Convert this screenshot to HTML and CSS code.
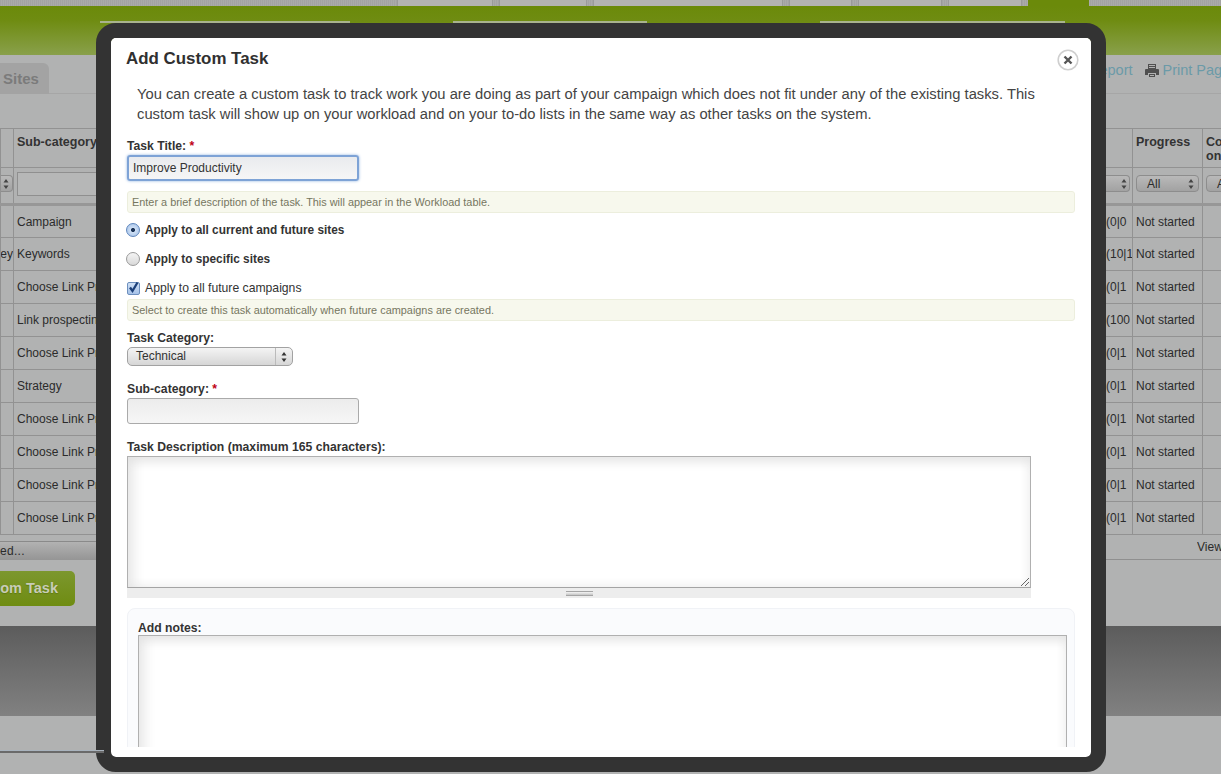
FILE: index.html
```html
<!DOCTYPE html>
<html lang="en">
<head>
<meta charset="utf-8">
<title>Add Custom Task</title>
<link rel="stylesheet" href="styles.css">
</head>
<body>
<div class="page">
  <nav class="topnav">
    <span class="topnav-item w96"></span>
    <span class="topnav-item w88"></span>
    <span class="topnav-item w190"></span>
    <span class="topnav-item w62"></span>
    <span class="topnav-item w84"></span>
    <span class="topnav-item w74"></span>
    <span class="topnav-active"></span>
  </nav>
  <div class="band">
    <div class="subnav">
      <span class="subnav-item s1"></span>
      <span class="subnav-item s2"></span>
      <span class="subnav-item s3"></span>
    </div>
  </div>
  <div class="toolbar">
    <div class="tab">Sites</div>
    <div class="actions">
      <a class="action">Report</a>
      <svg class="printer" width="14" height="15" viewBox="0 0 14 15"><path fill="#4f4f4f" d="M3 1h8v5H3zM1 6h12a1 1 0 0 1 1 1v5h-3v-2H3v2H0V7a1 1 0 0 1 1-1zM4 11h6v3H4z"/><path fill="#b2b2b2" d="M4 2h6v1H4zM4 4h6v1H4zM5 12h4v1H5z"/></svg>
      <a class="action">Print Page</a>
    </div>
  </div>
  <table class="grid">
    <colgroup><col class="c0"><col class="c1"><col class="c2"><col class="c3"><col class="c4"><col class="c5"></colgroup>
    <thead>
      <tr class="head"><th></th><th>Sub-category</th><th></th><th></th><th>Progress</th><th>Co on</th></tr>
      <tr class="filters">
        <td><div class="fsel edge"><svg width="6" height="10" viewBox="0 0 6 10"><path fill="#444" d="M3 0l2.5 3.5h-5zM3 10L.5 6.500h5z"/></svg></div></td>
        <td><div class="ffield"></div></td>
        <td></td>
        <td><div class="fsel score"><svg width="6" height="10" viewBox="0 0 6 10"><path fill="#444" d="M3 0l2.500 3.500h-5zM3 10L.5 6.500h5z"/></svg></div></td>
        <td><div class="fsel"><span>All</span><svg width="6" height="10" viewBox="0 0 6 10"><path fill="#444" d="M3 0l2.500 3.500h-5zM3 10L.5 6.500h5z"/></svg></div></td>
        <td><div class="fsel"><span>All</span></div></td>
      </tr>
    </thead>
    <tbody>
      <tr><td></td><td>Campaign</td><td></td><td class="sc">(0|0</td><td>Not started</td><td></td></tr>
      <tr><td class="cut">Survey</td><td>Keywords</td><td></td><td class="sc">(10|1</td><td>Not started</td><td></td></tr>
      <tr><td></td><td>Choose Link Prospects</td><td></td><td class="sc">(0|1</td><td>Not started</td><td></td></tr>
      <tr><td></td><td>Link prospecting</td><td></td><td class="sc">(100</td><td>Not started</td><td></td></tr>
      <tr><td></td><td>Choose Link Prospects</td><td></td><td class="sc">(0|1</td><td>Not started</td><td></td></tr>
      <tr><td></td><td>Strategy</td><td></td><td class="sc">(0|1</td><td>Not started</td><td></td></tr>
      <tr><td></td><td>Choose Link Prospects</td><td></td><td class="sc">(0|1</td><td>Not started</td><td></td></tr>
      <tr><td></td><td>Choose Link Prospects</td><td></td><td class="sc">(0|1</td><td>Not started</td><td></td></tr>
      <tr><td></td><td>Choose Link Prospects</td><td></td><td class="sc">(0|1</td><td>Not started</td><td></td></tr>
      <tr><td></td><td>Choose Link Prospects</td><td></td><td class="sc">(0|1</td><td>Not started</td><td></td></tr>
    </tbody>
  </table>
  <div class="gridfoot">
    <div class="bulk">ed...</div>
    <div class="view">View</div>
  </div>
  <div class="addbtn">om Task</div>
  <footer class="footer"></footer>
  <div class="rule"></div>

  <div class="modal">
    <div class="modal-body">
      <h1 class="title">Add Custom Task</h1>
      <p class="intro">You can create a custom task to track work you are doing as part of your campaign which does not fit under any of the existing tasks. This custom task will show up on your workload and on your to-do lists in the same way as other tasks on the system.</p>
      <label class="label first">Task Title: <b class="req">*</b></label>
      <input class="field focus" type="text" value="Improve Productivity">
      <div class="hint h1">Enter a brief description of the task. This will appear in the Workload table.</div>
      <div class="choice c-r1"><span class="radio on"></span><strong>Apply to all current and future sites</strong></div>
      <div class="choice c-r2"><span class="radio"></span><strong>Apply to specific sites</strong></div>
      <div class="choice c-ck">
        <span class="check"><svg width="13" height="13" viewBox="0 0 13 13"><path fill="none" stroke="#1c3f78" stroke-width="2.300" d="M3 6.500l2.500 3.500L10.500 1.500"/></svg></span>
        <span class="plain-choice">Apply to all future campaigns</span>
      </div>
      <div class="hint h2">Select to create this task automatically when future campaigns are created.</div>
      <label class="label l-cat">Task Category:</label>
      <div class="select"><span class="select-text">Technical</span><span class="select-arrow"><svg width="6" height="10" viewBox="0 0 6 10"><path fill="#333" d="M3 0l2.500 3.500h-5zM3 10L.5 6.500h5z"/></svg></span></div>
      <label class="label l-sub">Sub-category: <b class="req">*</b></label>
      <input class="field plain" type="text">
      <label class="label l-desc">Task Description (maximum 165 characters):</label>
      <div class="desc">
        <textarea class="area tall"></textarea>
        <svg class="corner" width="10" height="10" viewBox="0 0 10 10"><path stroke="#666" fill="none" d="M1 9l8-8M5 9l4-4"/></svg>
        <div class="grip"><span class="grip-lines"></span></div>
      </div>
      <section class="notes">
        <label class="label l-notes">Add notes:</label>
        <textarea class="area note"></textarea>
      </section>
    </div>
    <svg class="close" width="22" height="22" viewBox="0 0 22 22"><circle cx="11" cy="11" r="9.800" fill="#fff" stroke="#cfcfcf" stroke-width="1.600"/><path stroke="#555" stroke-width="2.400" fill="none" d="M7.500 7.500l7 7M14.500 7.500l-7 7"/></svg>
  </div>
</div>
</body>
</html>
```
FILE: styles.css
```css
* { box-sizing: border-box; }
html, body { margin: 0; padding: 0; }
body { font-family: "Liberation Sans", Arial, sans-serif; color: #2b2b2b; }
.page { position: relative; width: 1221px; height: 774px; overflow: hidden; background: #b1b2b2; }

.topnav { display: flex; height: 6px; padding-left: 397px; gap: 6px; background: repeating-linear-gradient(90deg, #a3a3a3 0 1px, #aaaaaa 1px 2px); }
.topnav-item { background: #b3b3b3; border-left: 1px solid #9a9a9a; border-right: 1px solid #9a9a9a; }
.w96 { width: 96px; } .w88 { width: 88px; } .w190 { width: 190px; } .w62 { width: 63px; } .w84 { width: 84px; } .w74 { width: 74px; }
.topnav-active { width: 61px; background: #6b8a0a; }

.band { height: 49px; background: linear-gradient(#6b8a0a 0, #6f8c12 30%, #89a04b 100%); }
.subnav { display: flex; padding: 15px 0 0 100px; }
.subnav-item { height: 2px; background: #a9b38e; }
.s1 { width: 250px; } .s2 { width: 194px; margin-left: 103px; } .s3 { width: 245px; margin-left: 173px; }

.toolbar { display: flex; height: 39px; border-bottom: 1px solid #a6a6a6; }
.tab { flex: none; width: 49px; height: 31px; margin-top: 8px; padding: 7px 0 0 3px; background: #a3a3a3; border-top-right-radius: 6px; font-size: 15px; font-weight: 700; color: #7b7b7b; }
.actions { display: flex; flex: none; align-items: center; margin-left: 1040px; height: 30px; white-space: nowrap; }
.action { font-size: 14.500px; color: #6b9aa8; }
.printer { flex: none; margin: 0 4px 0 12px; }

.grid { width: 1260px; margin-top: 34px; table-layout: fixed; border-collapse: collapse; font-size: 12px; }
.c0 { width: 13px; } .c1 { width: 120px; } .c2 { width: 970px; } .c3 { width: 29px; } .c4 { width: 70px; } .c5 { width: 58px; }
.grid th, .grid td { padding: 0 3px; border: 1px solid #929292; white-space: nowrap; overflow: hidden; text-align: left; }
.grid tr { height: 33px; }
.grid .head { height: 39px; }
.grid .filters { height: 37px; }
.grid .filters td { padding-bottom: 4px; }
.grid th { vertical-align: top; padding-top: 6px; font-size: 12.500px; line-height: 14px; white-space: normal; color: #333; }
.grid th:nth-child(2) { white-space: nowrap; }
.grid th:last-child { padding-right: 30px; }
.grid thead { border-bottom: 3px solid #979797; }
.grid .sc { padding: 0 0 0 2px; }
.grid .cut { direction: rtl; padding: 0; }
.fsel { display: flex; align-items: center; justify-content: space-between; height: 17px; padding: 0 4px 0 10px; background: linear-gradient(#b9b9b9, #a2a2a2); border: 1px solid #8d8d8d; border-radius: 4px; }
.fsel.edge { margin: 0 -3px; padding: 0 3px 0 0; justify-content: flex-end; border-left: 0; border-radius: 0 4px 4px 0; }
.fsel.score { margin-right: -1px; margin-left: -3px; padding-right: 2px; justify-content: flex-end; border-radius: 0 4px 4px 0; border-left: 0; }
.ffield { height: 24px; margin-top: 1px; width: 140px; background: #b6b7b7; border: 1px solid #8f8f8f; }

.gridfoot { display: flex; justify-content: space-between; height: 25px; border-bottom: 1px solid #8f8f8f; font-size: 12px; }
.bulk { width: 96px; height: 19px; margin-top: 6px; line-height: 18px; background: linear-gradient(#b2b2b2, #959595); border-top: 1px solid #8a8a8a; letter-spacing: .3px; }
.view { width: 24px; overflow: hidden; line-height: 25px; }

.addbtn { width: 75px; height: 35px; margin-top: 11px; padding: 0 17px 0 0; text-align: right; line-height: 34px; font-size: 14.500px; font-weight: 700; color: #c8ccb8; text-shadow: 0 1px 1px #5f7a10; background: linear-gradient(#7c972e, #6f8c12); border-radius: 0 5px 5px 0; }
.footer { height: 90px; margin-top: 20px; background: linear-gradient(#5c5c5c, #818181); }
.rule { position: absolute; left: 0; top: 750px; width: 104px; height: 3px; z-index: 2; background: linear-gradient(#a9b3bd 0 1px, #6a6a6a 1px); }

.modal { position: absolute; left: 96px; top: 23px; width: 1010px; height: 749px; padding-bottom: 10px; background: #fff; border: 15px solid #333; border-radius: 20px; background-clip: padding-box; }
.modal-body { height: 709px; overflow: hidden; padding: 0 16px; background: #fff; border-radius: 5px 5px 0 0; }
.close { position: absolute; left: 946px; top: 11px; }
.title { margin: 0; padding: 10px 0 0; height: 46px; font-size: 16.900px; line-height: 21px; margin-left: -1px; color: #303030; }
.intro { margin: 0; padding: 0 40px 0 10px; height: 40px; font-size: 14.750px; line-height: 20px; color: #444; }
.label { display: block; font-size: 12.200px; font-weight: 700; line-height: 14px; color: #333; }
.first { margin-top: 15px; }
.req { color: #c00014; }
.field { display: block; width: 232px; height: 26px; font: 12px "Liberation Sans", Arial, sans-serif; color: #333; padding: 0 4px; outline: 0; }
.focus { margin-top: 2px; border: 2px solid #7ea3d6; border-radius: 3px; background: linear-gradient(#e9ebee, #f6f6f6); box-shadow: 0 0 3px #8fb2e0; }
.plain { margin-top: 2px; border: 1px solid #aaa; border-radius: 3px; background: linear-gradient(#ececec, #f6f6f6); }
.hint { height: 22px; padding-left: 4px; line-height: 21px; font-size: 10.900px; color: #76765f; background: #f7f8ed; border: 1px solid #eceedd; border-radius: 3px; }
.h1 { margin-top: 10px; }
.h2 { margin-top: 3px; }
.choice { display: flex; align-items: center; height: 16px; font-size: 11.850px; color: #333; }
.plain-choice { font-size: 12.200px; }
.c-r1 { margin-top: 9px; } .c-r2 { margin-top: 13px; } .c-ck { margin-top: 13px; height: 16px; }
.radio { flex: none; width: 14px; height: 14px; margin: 0 5px 0 -1px; border-radius: 50%; border: 1px solid #9a9a9a; background: linear-gradient(#f4f4f4, #d9d9d9); }
.radio.on { border-color: #5e86bd; background: radial-gradient(circle, #1c3458 0 1.800px, #cfe0f5 2.300px, #9fbde6 100%); }
.check { flex: none; display: flex; width: 13px; height: 13px; margin-right: 5px; border: 1px solid #6d8fbe; border-radius: 2px; background: linear-gradient(#cfe0f5, #a6c2e8); overflow: visible; }
.check svg { margin: -2px 0 0 -1px; flex: none; }
.l-cat { margin-top: 10px; }
.select { display: flex; width: 166px; height: 19px; margin-top: 2px; border: 1px solid #a2a2a2; border-radius: 5px; background: linear-gradient(#f4f4f4, #d6d6d6); font-size: 12px; line-height: 17px; color: #333; }
.select-text { flex: 1; padding-left: 8px; }
.select-arrow { display: flex; align-items: center; justify-content: center; width: 17px; border-left: 1px solid #bbb; }
.l-sub { margin-top: 16px; }
.l-desc { margin-top: 16px; }
.desc { position: relative; width: 904px; margin-top: 2px; }
.area { display: block; resize: none; padding: 0; outline: 0; border: 1px solid #b0b0b0; border-bottom-color: #a4a4a4; background: #fff; box-shadow: inset 0 14px 12px -10px #e2e2e2, inset 16px 0 14px -12px #e2e2e2, inset -10px 0 10px -8px #eeeeee, inset 0 -10px 10px -8px #eeeeee; }
.tall { width: 904px; height: 132px; }
.corner { position: absolute; right: 1px; bottom: 11px; }
.grip { display: flex; justify-content: center; align-items: center; height: 10px; background: #ededed; }
.grip-lines { width: 27px; height: 5px; border-top: 1px solid #a5a5a5; border-bottom: 1px solid #a5a5a5; background: linear-gradient(#f4f4f4, #c5c5c5); }
.notes { height: 200px; margin-top: 10px; padding: 12px 7px 0 10px; background: #fafbfd; border: 1px solid #f0f2f6; border-radius: 8px; }
.l-notes { height: 14px; }
.note { width: 929px; height: 180px; }
```
